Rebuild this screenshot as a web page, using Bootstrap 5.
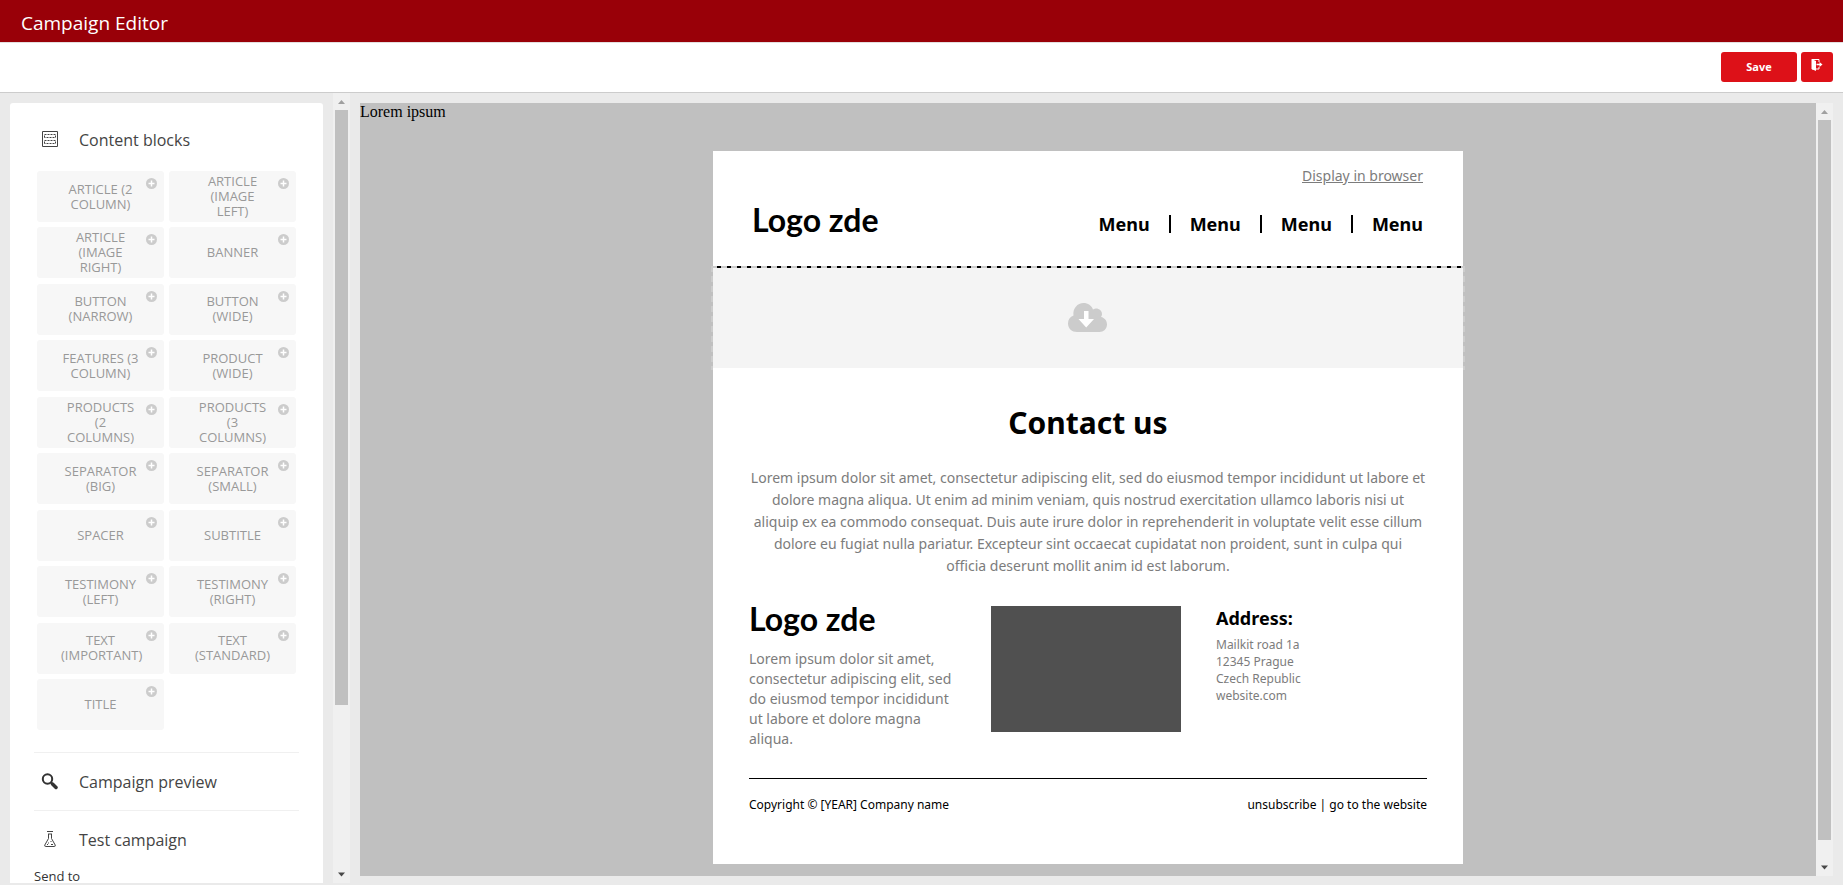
<!DOCTYPE html>
<html lang="en">
<head>
<meta charset="utf-8">
<meta name="viewport" content="width=device-width, initial-scale=1">
<title>Campaign Editor</title>
<link href="https://cdn.jsdelivr.net/npm/bootstrap@5.3.0/dist/css/bootstrap.min.css" rel="stylesheet">
<style>
  body { background: #eaeaea; font-family: "Open Sans", sans-serif; color: #333; }
  .app-head { background: #990008; height: 42px; padding: 6px 21px 0; color: #fff; }
  .app-head h1 { font-size: 19px; line-height: 34px; font-weight: 400; }
  .tool-strip { background: #fff; height: 51px; padding: 0 10px 2px; border-top: 1px solid #e3dfdf; border-bottom: 1px solid #ccc; gap: 4px; }
  .btn-red { background: #dd1118; color: #fff; height: 30px; border: 0; border-radius: 3px; font-size: 11px; line-height: 14px; font-weight: 700; padding: 0; }
  .btn-red:hover { background: #b80d13; color: #fff; }
  .btn-save { width: 76px; }
  .btn-exit { width: 32px; }

  .workspace { min-height: 0; }
  .side-card { width: 313px; margin: 10px 10px 2px; padding: 8px 24px 0; background: #fff; border-radius: 3px 3px 0 0; }
  .side-title { height: 57px; gap: 21px; padding: 2px 7px 0; font-size: 16px; font-weight: 400; margin: 0; color: #444; }
  .side-title svg { width: 17px; height: 17px; margin-bottom: 2px; }
  .side-line { border-top: 1px solid #f0f0f0; }
  .block-grid { display: grid; grid-template-columns: 127px 127px; column-gap: 5px; grid-auto-rows: 51px; align-content: space-between; min-height: 559px; margin: 3px 3px 22px; }
  .block-btn { background: #f7f7f7; border: 0; border-radius: 3px; padding: 0 24px; color: #999; font-size: 13px; line-height: 15px; text-transform: uppercase; }
  .block-btn svg { position: absolute; top: 7px; right: 7px; width: 11px; height: 11px; }
  .send-label { font-size: 13px; line-height: 16px; }

  .scroll-rail { width: 17px; background: #f0f0f0; flex: none; }
  .scroll-rail svg { width: 17px; height: 17px; flex: none; }
  .side-rail { margin-bottom: 2px; }
  .scroll-thumb { width: 13px; background: #c0c0c0; }
  .rail-space { min-height: 0; }

  .canvas-wrap { margin: 10px 10px 9px; min-width: 0; }
  .canvas-pane { background: #c0c0c0; min-width: 0; }
  .intro { font: 16px/18px "Liberation Serif", serif; color: #000; margin-bottom: 30px; }
  .sheet { width: 750px; max-width: 100%; background: #fff; color: #7c7c7c; font-family: "Noto Sans", sans-serif; font-size: 14px; padding-bottom: 50px; }
  .sheet-top { height: 115px; padding: 14px 40px 0 39px; }
  .sheet a { color: inherit; }
  .sheet .menu-link { color: #000; font-size: 18px; font-weight: 700; line-height: 18px; text-decoration: none; }
  .brand-row { margin-top: 21px; }
  .menu-bar { gap: 19px; margin-top: 8px; }
  .menu-bar i { width: 2px; height: 18px; background: #000; }
  .logo-text { font-family: Lato, sans-serif; font-weight: 700; font-size: 32px; line-height: 26px; color: #000; }
  .drop-zone { height: 102px; background: #f4f4f4; border-top: 2px solid #000; padding-right: 2px; }
  .drop-zone::before { content: ""; position: absolute; inset: -2px;
    background:
      repeating-linear-gradient(90deg, #ccc 0 6px, transparent 6px 10px) top / 100% 2px no-repeat,
      repeating-linear-gradient(#ccc 0 6px, transparent 6px 10px) left / 2px 100% no-repeat,
      repeating-linear-gradient(#ccc 0 6px, transparent 6px 10px) right / 2px 100% no-repeat; }
  .drop-zone svg { width: 39px; height: 30px; }
  .sheet-body { padding: 0 36px; }
  .sheet h2 { font-size: 30px; line-height: 36px; font-weight: 700; color: #000; margin: 37px 0 26px; }
  .lead-text { line-height: 22px; margin: 0 0 29px; }
  .col-text { width: 212px; }
  .col-text p { line-height: 20px; margin: 17px 0 0; }
  .photo { width: 190px; height: 126px; background: #505050; margin: 0 35px 0 30px; }
  .sheet h3 { font-size: 18px; line-height: 24px; font-weight: 700; color: #000; margin: 0 0 6px; }
  .sheet address { font-size: 12px; line-height: 17px; margin: 0; }
  .foot-row { border-top: 1px solid #000; margin-top: 29px; padding-top: 17px; font-size: 12px; line-height: 18px; color: #000; }
  .foot-row a { text-decoration: none; }
</style>
</head>
<body>
<svg class="d-none" aria-hidden="true">
  <symbol id="plus" viewBox="0 0 11 11"><circle cx="5.500" cy="5.500" r="5.500" fill="#ccc"/><path d="M5.500 2.500v6M2.500 5.500h6" stroke="#fff" stroke-width="1.500"/></symbol>
  <symbol id="up" viewBox="0 0 17 17"><path d="M5 11l3.500-4 3.500 4z" fill="#a0a0a0"/></symbol>
  <symbol id="down" viewBox="0 0 17 17"><path d="M5 6.500l3.500 4 3.500-4z" fill="#484848"/></symbol>
</svg>
<div class="vh-100 d-flex flex-column overflow-hidden">
  <header class="app-head flex-shrink-0"><h1 class="m-0">Campaign Editor</h1></header>
  <div class="tool-strip d-flex align-items-center justify-content-end flex-shrink-0">
    <button type="button" class="btn btn-red btn-save">Save</button>
    <button type="button" class="btn btn-red btn-exit d-flex align-items-center justify-content-center pb-1" aria-label="Exit">
      <svg width="12" height="12" viewBox="0 0 12 12"><path d="M1 .500h7v2.500M1 10h7V8" fill="none" stroke="#fff"/><path d="M.500 0L5 2v10L.500 10z" fill="#fff"/><path d="M5.500 5.500h4" stroke="#fff" stroke-width="1.500"/><path d="M8.500 3l3 2.500-3 2.500z" fill="#fff"/></svg>
    </button>
  </div>

  <div class="workspace d-flex flex-fill">
    <aside class="side-card flex-shrink-0 overflow-hidden">
      <h2 class="side-title d-flex align-items-center">
        <svg viewBox="0 0 17 17" fill="none" stroke="#444"><path d="M1.500 .500h15v15h-15z"/><path d="M3.500 6.500v-3h11v3z" stroke-dasharray="2 1"/><path d="M3.500 12.500v-3h11v3z" stroke-dasharray="2 1"/></svg>
        Content blocks
      </h2>
      <div class="block-grid">
        <button type="button" class="block-btn position-relative">Article (2 column)<svg><use href="#plus"/></svg></button>
        <button type="button" class="block-btn position-relative">Article (image left)<svg><use href="#plus"/></svg></button>
        <button type="button" class="block-btn position-relative">Article (image right)<svg><use href="#plus"/></svg></button>
        <button type="button" class="block-btn position-relative">Banner<svg><use href="#plus"/></svg></button>
        <button type="button" class="block-btn position-relative">Button (narrow)<svg><use href="#plus"/></svg></button>
        <button type="button" class="block-btn position-relative">Button (wide)<svg><use href="#plus"/></svg></button>
        <button type="button" class="block-btn position-relative">Features (3 column)<svg><use href="#plus"/></svg></button>
        <button type="button" class="block-btn position-relative">Product (wide)<svg><use href="#plus"/></svg></button>
        <button type="button" class="block-btn position-relative">Products (2 columns)<svg><use href="#plus"/></svg></button>
        <button type="button" class="block-btn position-relative">Products (3 columns)<svg><use href="#plus"/></svg></button>
        <button type="button" class="block-btn position-relative">Separator (big)<svg><use href="#plus"/></svg></button>
        <button type="button" class="block-btn position-relative">Separator (small)<svg><use href="#plus"/></svg></button>
        <button type="button" class="block-btn position-relative">Spacer<svg><use href="#plus"/></svg></button>
        <button type="button" class="block-btn position-relative">Subtitle<svg><use href="#plus"/></svg></button>
        <button type="button" class="block-btn position-relative">Testimony (left)<svg><use href="#plus"/></svg></button>
        <button type="button" class="block-btn position-relative">Testimony (right)<svg><use href="#plus"/></svg></button>
        <button type="button" class="block-btn position-relative">Text (important)<svg><use href="#plus"/></svg></button>
        <button type="button" class="block-btn position-relative">Text (standard)<svg><use href="#plus"/></svg></button>
        <button type="button" class="block-btn position-relative">Title<svg><use href="#plus"/></svg></button>
      </div>
      <div class="side-line">
        <h2 class="side-title d-flex align-items-center">
          <svg viewBox="0 0 17 17" fill="none" stroke="#333"><circle cx="6.500" cy="6" r="4.700" stroke-width="2"/><path d="M10 9.500l1.500 1.500" stroke-width="2"/><path d="M11.500 11l3.500 3.500" stroke-width="3.500" stroke-linecap="round"/></svg>
          Campaign preview
        </h2>
      </div>
      <div class="side-line">
        <h2 class="side-title d-flex align-items-center">
          <svg viewBox="0 0 17 17" fill="none" stroke="#444"><path d="M6 .500h6M7.500 3v4.500L3.800 14q-.500 1.500 1 1.500h8.400q1.500 0 1-1.500L10.500 7.500V3M7 3h4"/><path d="M7 12h1M9.500 10.500h1M6 13.500h1M10 13.500h2"/></svg>
          Test campaign
        </h2>
      </div>
      <div class="send-label">Send to</div>
    </aside>

    <div class="scroll-rail side-rail d-flex flex-column align-items-center" aria-hidden="true">
      <svg><use href="#up"/></svg>
      <div class="rail-space flex-fill"><div class="scroll-thumb" style="height:78.700%"></div></div>
      <svg><use href="#down"/></svg>
    </div>

    <main class="canvas-wrap d-flex flex-fill">
      <div class="canvas-pane flex-fill overflow-hidden">
        <div class="intro">Lorem ipsum</div>
        <div class="sheet mx-auto">
          <div class="sheet-top">
            <div class="text-end lh-base"><a href="#">Display in browser</a></div>
            <div class="brand-row d-flex align-items-center justify-content-between">
              <div class="logo-text">Logo zde</div>
              <nav class="menu-bar d-flex align-items-center">
                <a class="menu-link" href="#">Menu</a><i></i>
                <a class="menu-link" href="#">Menu</a><i></i>
                <a class="menu-link" href="#">Menu</a><i></i>
                <a class="menu-link" href="#">Menu</a>
              </nav>
            </div>
          </div>
          <div class="drop-zone position-relative d-flex align-items-center justify-content-center">
            <svg viewBox="0 0 39 30"><path d="M9 29C4 29 0 25.500 0 20.500c0-4 2-6.500 5.500-8C4.500 5.500 9.500 0 15.500 0c4.500 0 8 2.500 9.500 6.500 4-2.500 9 .500 9 4.500 0 1.200-.300 2-1 3 3.500.700 6 3.500 6 7.500 0 4.500-3.500 7.500-7.500 7.500z" fill="#ccc"/><path d="M16 8h4.500v8H26l-7.800 8.500L10.500 16H16z" fill="#fff"/></svg>
          </div>
          <div class="sheet-body overflow-hidden">
            <h2 class="text-center">Contact us</h2>
            <p class="lead-text text-center">Lorem ipsum dolor sit amet, consectetur adipiscing elit, sed do eiusmod tempor incididunt ut labore et dolore magna aliqua. Ut enim ad minim veniam, quis nostrud exercitation ullamco laboris nisi ut aliquip ex ea commodo consequat. Duis aute irure dolor in reprehenderit in voluptate velit esse cillum dolore eu fugiat nulla pariatur. Excepteur sint occaecat cupidatat non proident, sunt in culpa qui<br>officia deserunt mollit anim id est laborum.</p>
            <div class="d-flex align-items-start">
              <div class="col-text">
                <div class="logo-text">Logo zde</div>
                <p>Lorem ipsum dolor sit amet, consectetur adipiscing elit, sed do eiusmod tempor incididunt ut labore et dolore magna aliqua.</p>
              </div>
              <div class="photo"></div>
              <div>
                <h3>Address:</h3>
                <address>Mailkit road 1a<br>12345 Prague<br>Czech Republic<br>website.com</address>
              </div>
            </div>
            <div class="foot-row d-flex justify-content-between">
              <span>Copyright © [YEAR] Company name</span>
              <span><a href="#">unsubscribe</a> | <a href="#">go to the website</a></span>
            </div>
          </div>
        </div>
      </div>
      <div class="scroll-rail d-flex flex-column align-items-center" aria-hidden="true">
        <svg><use href="#up"/></svg>
        <div class="rail-space flex-fill"><div class="scroll-thumb" style="height:97.400%"></div></div>
        <svg><use href="#down"/></svg>
      </div>
    </main>
  </div>
</div>
<script src="https://cdn.jsdelivr.net/npm/bootstrap@5.3.0/dist/js/bootstrap.bundle.min.js"></script>
</body>
</html>
